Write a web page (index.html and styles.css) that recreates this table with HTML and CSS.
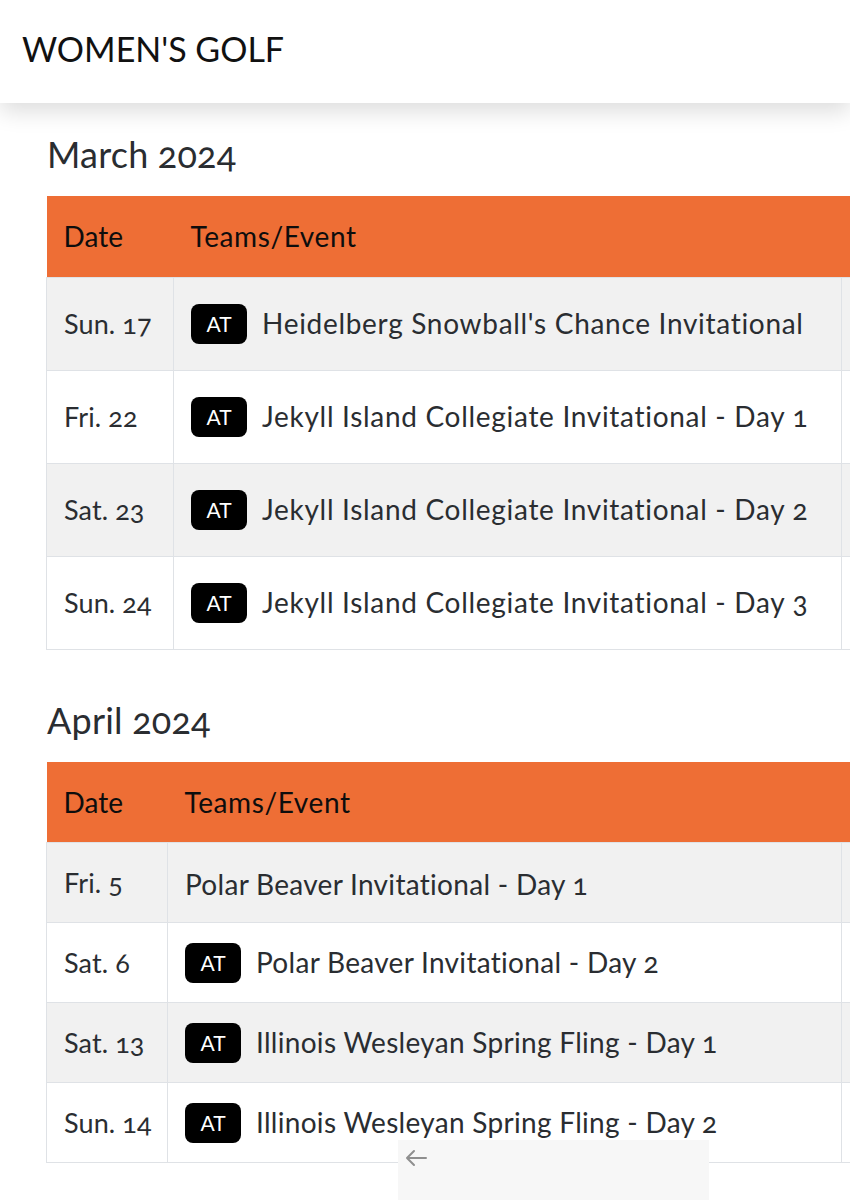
FILE: index.html
```html
<!DOCTYPE html>
<html lang="en">
<head>
<meta charset="utf-8">
<title>Women's Golf</title>
<link rel="stylesheet" href="styles.css">
</head>
<body>
<header class="topbar">
  <h1 class="title">WOMEN'S GOLF</h1>
</header>
<main class="content">
  <section class="month">
    <h2 class="month-title">March 2024</h2>
    <div class="table-wrap">
      <table class="sched sched-march">
        <thead>
          <tr><th class="c-date">Date</th><th class="c-event">Teams/Event</th><th class="c-extra"></th></tr>
        </thead>
        <tbody>
          <tr><td class="c-date">Sun. 17</td><td class="c-event"><span class="badge">AT</span><span class="ev">Heidelberg Snowball's Chance Invitational</span></td><td class="c-extra"></td></tr>
          <tr><td class="c-date">Fri. 22</td><td class="c-event"><span class="badge">AT</span><span class="ev">Jekyll Island Collegiate Invitational - Day 1</span></td><td class="c-extra"></td></tr>
          <tr><td class="c-date">Sat. 23</td><td class="c-event"><span class="badge">AT</span><span class="ev">Jekyll Island Collegiate Invitational - Day 2</span></td><td class="c-extra"></td></tr>
          <tr><td class="c-date">Sun. 24</td><td class="c-event"><span class="badge">AT</span><span class="ev">Jekyll Island Collegiate Invitational - Day 3</span></td><td class="c-extra"></td></tr>
        </tbody>
      </table>
    </div>
  </section>
  <section class="month">
    <h2 class="month-title">April 2024</h2>
    <div class="table-wrap">
      <table class="sched sched-april">
        <thead>
          <tr><th class="c-date">Date</th><th class="c-event">Teams/Event</th><th class="c-extra"></th></tr>
        </thead>
        <tbody>
          <tr><td class="c-date">Fri. 5</td><td class="c-event"><span class="ev">Polar Beaver Invitational - Day 1</span></td><td class="c-extra"></td></tr>
          <tr><td class="c-date">Sat. 6</td><td class="c-event"><span class="badge">AT</span><span class="ev">Polar Beaver Invitational - Day 2</span></td><td class="c-extra"></td></tr>
          <tr><td class="c-date">Sat. 13</td><td class="c-event"><span class="badge">AT</span><span class="ev">Illinois Wesleyan Spring Fling - Day 1</span></td><td class="c-extra"></td></tr>
          <tr><td class="c-date">Sun. 14</td><td class="c-event"><span class="badge">AT</span><span class="ev">Illinois Wesleyan Spring Fling - Day 2</span></td><td class="c-extra"></td></tr>
        </tbody>
      </table>
    </div>
  </section>
</main>
<div class="scroll-hint">
  <svg width="24" height="18" viewBox="0 0 24 18" fill="none" stroke="#8f8f8f" stroke-width="2" stroke-linecap="round" stroke-linejoin="round"><path d="M22 9H3M10 2L3 9l7 7"/></svg>
</div>
</body>
</html>
```
FILE: styles.css
```css
* { box-sizing: border-box; }
html, body { margin: 0; padding: 0; background: #fff; }
body {
  font-family: Lato, "Open Sans", "Liberation Sans", sans-serif;
  color: #2a2d31;
  font-variant-numeric: oldstyle-nums;
  width: 850px;
  height: 1200px;
  overflow: hidden;
  position: relative;
}
.topbar {
  height: 103px;
  background: #fff;
  display: flex;
  align-items: center;
  padding-left: 22px;
  box-shadow: 0 8px 22px rgba(0,0,0,0.14);
  position: relative;
  z-index: 2;
}
.title {
  margin: 0;
  font-size: 34px;
  font-weight: 400;
  color: #111;
  letter-spacing: 0;
  padding-bottom: 6px;
}
.content { padding: 27px 0 0 46px; }
.month { margin-bottom: 46px; }
.month-title {
  margin: 0 0 18px 1px;
  font-size: 36px;
  font-weight: 400;
  line-height: 48px;
  color: #2a2d31;
  letter-spacing: 0.2px;
}
.table-wrap { overflow: hidden; width: 804px; }
.sched {
  border-collapse: collapse;
  width: 900px;
  table-layout: fixed;
  font-size: 27px;
}
.sched th {
  background: #ee6e35;
  color: #0d0d0d;
  font-weight: 400;
  text-align: left;
  height: 81px;
  padding: 0 0 0 17px;
  font-size: 28px;
}
.sched th.c-event { letter-spacing: 0.6px; }
.sched td {
  border: 1px solid #dfe2e6;
  padding: 0 0 0 17px;
  vertical-align: middle;
}
.sched td.c-date { letter-spacing: 0.1px; }
.sched tbody tr:nth-child(odd) td { background: #f1f1f1; }
.sched tbody tr:nth-child(even) td { background: #fff; }
.sched-march .c-date { width: 127px; }
.sched-march .c-event { width: 668px; }
.sched-march td { height: 93px; }
.sched-april .c-date { width: 121px; }
.sched-april .c-event { width: 674px; }
.sched-april td { height: 80px; }
.c-extra { width: 105px; }
.c-event { white-space: nowrap; }
.ev { vertical-align: middle; font-size: 28px; letter-spacing: 0.7px; }
.sched-april .ev { letter-spacing: 0.3px; }
.badge {
  display: inline-flex;
  align-items: center;
  justify-content: center;
  width: 56px;
  height: 40px;
  border-radius: 8px;
  background: #000;
  color: #fff;
  font-size: 21px;
  margin-right: 15px;
  vertical-align: middle;
}
.scroll-hint {
  position: absolute;
  left: 398px;
  top: 1140px;
  width: 311px;
  height: 60px;
  background: #f7f7f7;
  padding: 9px 0 0 6px;
}
```
